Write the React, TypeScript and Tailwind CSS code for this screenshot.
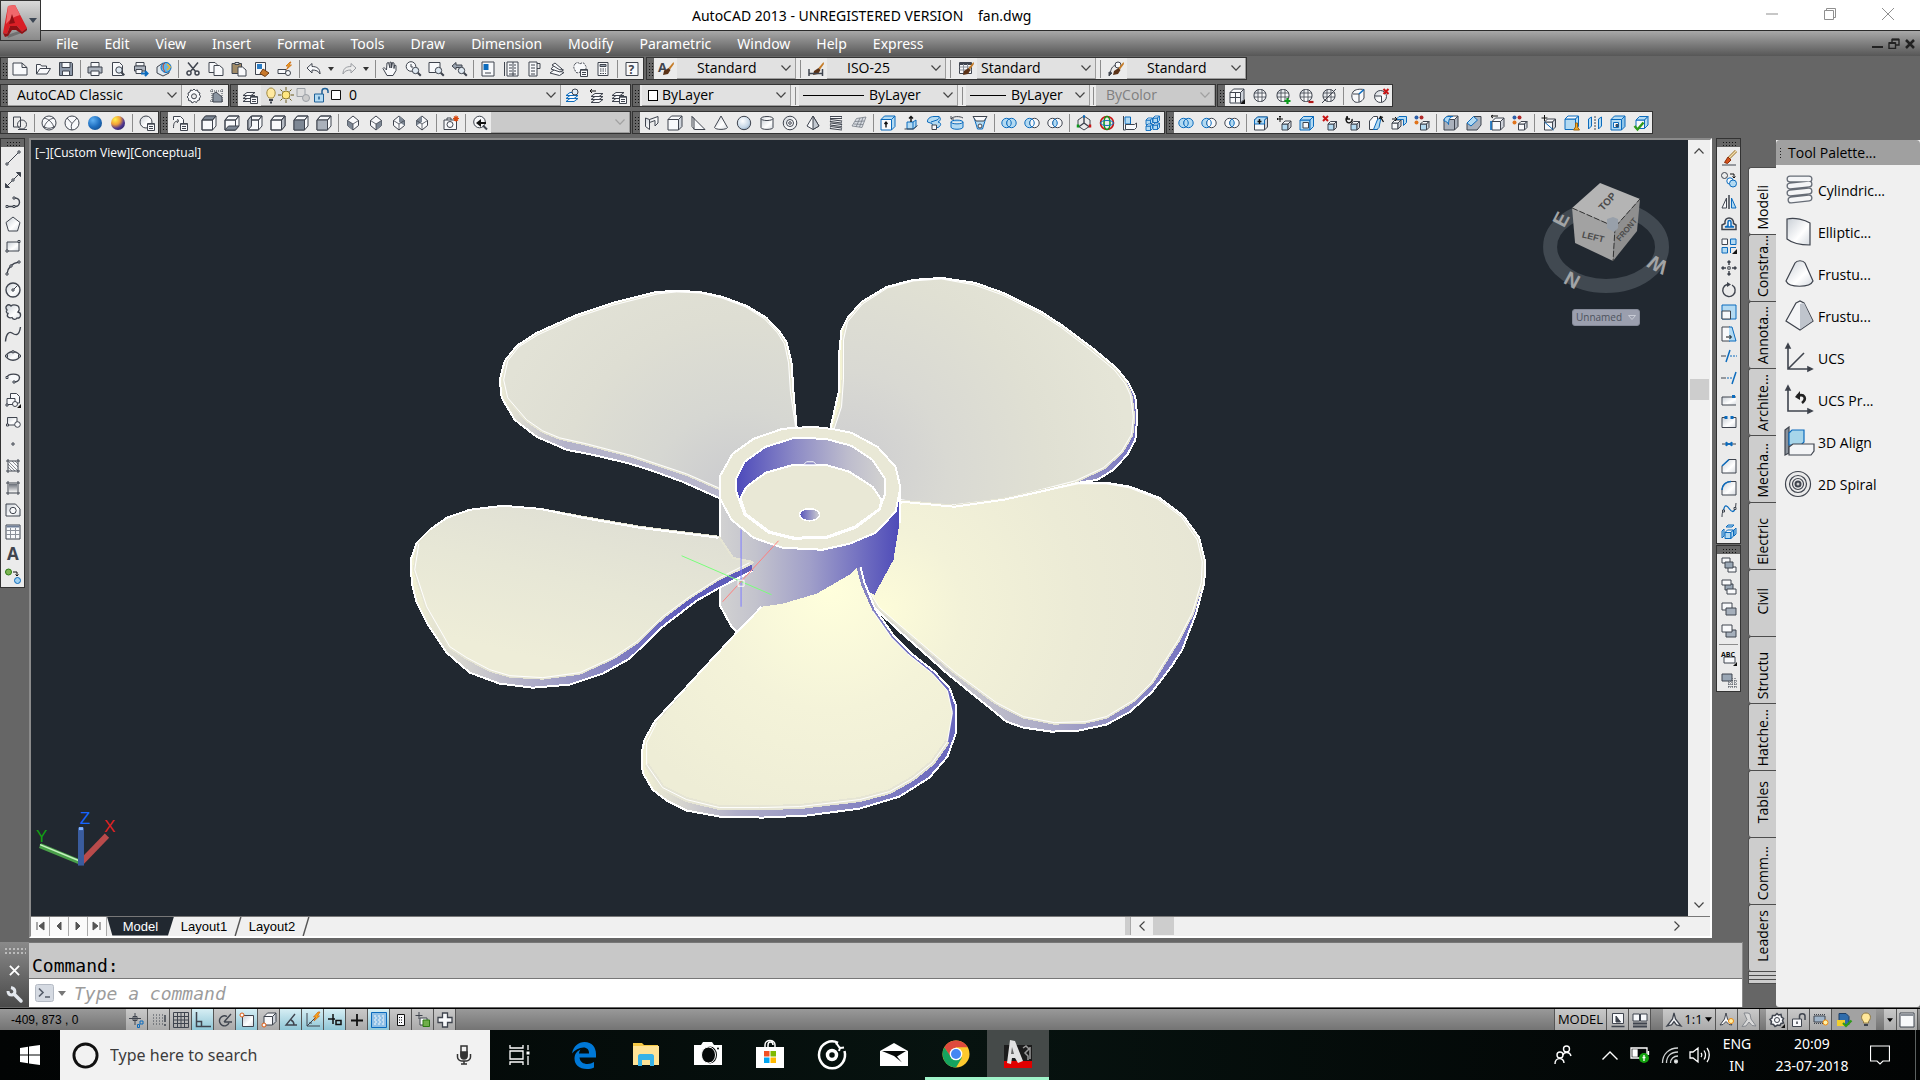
import React from 'react';

const K = '#3f444e';
const B = '#0b6bbd';
const L = '#b3daf2';
const W = '#f8f9fb';

interface CubeProps {
  x?: number;
  y?: number;
  s?: number;
  d?: number;
  c?: string;
  f?: string;
  t?: string;
  r?: string;
}

// Small isometric box used by most of the solid editing icons
const Cube: React.FC<CubeProps> = ({ x = 1.5, y = 1.5, s = 9, d = 4, c = K, f = W, t = W, r = '#cfd4db' }) => (
  <g stroke={c} strokeLinejoin="round">
    <path fill={f} d={`M${x} ${y + d}h${s}v${s}h${-s}z`} />
    <path fill={t} d={`M${x} ${y + d}l${d} ${-d}h${s}l${-d} ${d}z`} />
    <path fill={r} d={`M${x + s} ${y + d}l${d} ${-d}v${s}l${-d} ${d}z`} />
  </g>
);

const Node: React.FC<{ x: number; y: number; c?: string }> = ({ x, y, c = K }) => (
  <path fill={W} stroke={c} strokeWidth="1" d={`M${x - 1} ${y - 1}h2v2h-2z`} />
);

const List = () => (
  <g>
    <path fill={W} d="M8.5 8.5h7v7h-7z" />
    <path d="M8.5 9.2h7M10 11.5h4M10 13.5h4" />
  </g>
);

const Lens: React.FC<{ x?: number; y?: number }> = ({ x = 10, y = 10 }) => (
  <g>
    <circle cx={x} cy={y} r="3.2" fill="#dfe9f2" />
    <path strokeWidth="2" d={`M${x + 2.3} ${y + 2.3}l3 3`} />
  </g>
);

const Brush: React.FC = () => (
  <g stroke="none">
    <path fill="#c47b27" d="M15.5 1l-5 6 1.500 1.500L16 3z" />
    <path fill="#5b3216" d="M10.500 7L6 10l-1 4 5-1 2.500-4z" />
  </g>
);

const Rings: React.FC<{ a: string; b: string; m: string; ca?: string; cb?: string }> = ({ a, b, m, ca = B, cb = B }) => (
  <g>
    <circle cx="5.500" cy="8" r="4.700" fill={a} stroke={ca} />
    <circle cx="10.500" cy="8" r="4.700" fill={b} stroke={cb} />
    <path fill={m} stroke={B} d="M8 4a4.700 4.700 0 0 1 0 8 4.700 4.700 0 0 1 0-8z" />
  </g>
);

const Sheets: React.FC<{ c?: string }> = ({ c = K }) => (
  <g fill={W} stroke={c}>
    <path d="M1 13.500l4-3h8l-4 3z" />
    <path d="M1 10.500l4-3h8l-4 3z" />
    <path d="M1 7.500l4-3h8l-4 3z" />
  </g>
);

const Globe = () => (
  <g>
    <rect x="2" y="1.500" width="12" height="12" rx="5.500" fill="url(#shine)" />
    <path d="M2 5h12M2 9h12M6 1.500v12M10 1.500v12" strokeWidth=".8" />
  </g>
);

const Dots = () => (
  <g stroke="none">
    <circle cx="2.500" cy="2.500" r="2" fill="#2d5fa8" />
    <circle cx="7.500" cy="2.500" r="2" fill="#b02a2a" />
    <circle cx="2.500" cy="7.500" r="2" fill="#e0741c" />
  </g>
);

const ViewBox: React.FC<{ side: string }> = ({ side }) => (
  <g strokeLinejoin="round">
    <path fill={W} d="M1 5l3.500-4H15v10l-3.500 4H1z" />
    <path fill={side === 'Top' ? '#7d8794' : 'none'} d="M1 5l3.500-4H15l-3.500 4z" />
    <path fill={side === 'Front' ? '#7d8794' : side === 'Back' ? '#aab1bb' : 'none'} d="M1 5h10.500v10H1z" />
    {side === 'Right' && <path fill="#b4bac3" d="M11.500 5L15 1v10l-3.500 4z" />}
    {side === 'Left' && <path fill="#b4bac3" d="M1 5l3.500-4v10L1 15z" />}
    {side === 'Bottom' && <path fill="#7d8794" d="M1 15l3.500-4H15l-3.500 4z" />}
    <path d="M11.500 5L15 1" />
  </g>
);

const Iso: React.FC<{ shade: string }> = ({ shade }) => (
  <g strokeLinejoin="round">
    <path fill={W} d="M8 1l5.500 4.500v5L8 15l-5.500-4.500v-5z" />
    <path fill="#7d8794" stroke="none" d={shade} />
    <path strokeWidth=".8" d="M2.500 5.500L8 9l5.500-3.500M8 9v6" />
  </g>
);

const Hash = () => <path d="M3 1v14M13 1v14M1 3h14M1 13h14" />;

const ICONS: Record<string, React.ReactNode> = {
  'New': <path fill={W} d="M1 2h9l5 4.500V14H1zM10 2v4.500h5" />,
  'Open': <path fill={W} d="M1.500 13V3.500h4l1 1.500h5v2.500M1.500 13l3.500-5.500h10.500L12 13z" />,
  'Save': <g><path fill="#8d98a8" d="M1.500 1.500h12l1 1v12h-13z" /><path fill={W} d="M4 1.500h8v5H4zM4.500 10h7v4.500h-7z" /></g>,
  'Plot': <g><path fill={W} d="M4 1.500h8V6H4z" /><path fill="#aeb5bf" d="M1 6h14v6H1z" /><path fill={W} d="M4 10h8v4.500H4z" /></g>,
  'Plot Preview': <g><path fill={W} d="M2.500 1.500h7l3 3v10h-10z" /><Lens x={9} y={9} /></g>,
  'Publish': <g><path fill={W} d="M3 1.500h8V5H3z" /><path fill="#aeb5bf" d="M1.500 5h11v5h-11z" /><path fill={W} d="M3 8.500h6v4H3z" /><path stroke={B} strokeWidth="2" d="M8 12.500h6M12 10l2.500 2.500L12 15" /></g>,
  '3DDWF': <g><path fill="#dfe7ee" d="M1 6l6-4 6 4v6l-6 3-6-3z" /><circle cx="10" cy="6.500" r="5" fill="#63b6e8" stroke={B} /><path stroke="#d33b1f" d="M9 2c-3 2-2 6 0 9" /><path stroke="#f0b52c" strokeWidth="1.600" d="M11 3l3 3-3 3" /></g>,
  'Cut': <path strokeWidth="1.500" d="M3 1.500l7.500 9M13 1.500l-7.500 9M2 12.500a2 2 0 1 0 4-1 2 2 0 1 0-4 1M10 12a2 2 0 1 0 4 0 2 2 0 1 0-4 0" />,
  'Copy': <g fill={W}><path d="M1 1.500h6l2 2v8H1z" /><path d="M6 4.500h5.500l3.500 3v7H6z" /></g>,
  'Paste': <g><path fill="#a08a66" d="M1 2.500h9.500v10H1z" /><path fill="#ddd" d="M4 1.500h4v2H4z" /><path fill={W} d="M7 6h4.500l3.500 3v6H7z" /></g>,
  'Match Properties': <g><path fill={W} d="M1.500 1.500h10v12h-10z" /><path fill="#2b7cc4" stroke="none" d="M3 3h5v5H3z" /><path fill="#c8782a" stroke="#6b3a12" d="M9 8l6 4-4 3.500-5-3z" /></g>,
  'Block Editor': <g><path fill={W} d="M1 8.500h8v4H1z" /><circle cx="11" cy="12" r="2.500" fill={W} /><path fill="#f6a821" stroke="#c96a10" strokeWidth=".8" d="M13 1l-4 4h2.500L9.500 8.500l5-4.500H12l2-3z" /></g>,
  'Undo': <path fill={W} d="M1 7l5-4.500V5.500c5 0 8 2 8 7.500-1.500-3-4-4-8-4v3z" />,
  'Redo': <path stroke="#9a9da2" d="M15 7l-5-4.500V5.500c-5 0-8 2-8 7.500 1.500-3 4-4 8-4v3z" />,
  'Pan': <path fill={W} d="M4.500 9L2 6.500 1 7.500l4 7h6l3-5V4.500l-1.500-.5-.5 3.500V2l-1.500-.5L9.500 7V1.500L8 1v6L6.500 1.500 5 2z" />,
  'Zoom Realtime': <g><circle cx="6" cy="5.500" r="4.800" fill={W} /><path d="M6 3v3h2" /><Lens x={10.500} y={9.500} /></g>,
  'Zoom Window': <g><path fill={W} d="M1 1.500h11v10H1z" /><Lens x={10.500} y={9.500} /></g>,
  'Zoom Previous': <g><path fill="#9aa3af" d="M1 5l4-3.500V4h6v2.500H5V8.500z" /><Lens x={10.500} y={9.500} /></g>,
  'Properties': <g><path fill={W} d="M2 1h12v14H2z" /><path fill={B} stroke="none" d="M3.500 3h5v6h-5z" /><path d="M5 12h6" /></g>,
  'DesignCenter': <g><path fill={W} d="M4 1h11v14H4z" /><path d="M1.500 1v14M6 4h3M11 4h2M6 7h3M11 7h2M6 10h3M11 10h2M6 13h7M10 1v14" /></g>,
  'Tool Palettes': <g><path fill={W} d="M3 1h8v14H3z" /><path d="M11 2.500h3v5h-3M5 4h4M5 7h4M5 10h4M5 13h4" /></g>,
  'Sheet Set Manager': <g fill={W}><path d="M1 12l9.500 2.500 4.500-3-9.500-3z" /><path d="M2 8l9 3 3.500-2-9-5z" /><path d="M3 4l8 5 2-1L6 2z" /></g>,
  'Markup Set Manager': <g><path strokeDasharray="2 1" fill={W} d="M3 3c2-2.500 4-1 5 0 2-2 5-1 5 1 2 2 1 4 0 5 0 3-3 4-5 2-3 2-5 0-5-2-2-2-1-5 0-6z" /><List /></g>,
  'QuickCalc': <g><path fill={W} d="M3 1.500h10v13H3z" /><path fill="#9aa3af" d="M5 3.500h6v2H5z" /><path strokeDasharray="1.500 1" d="M5 8h6M5 10h6M5 12.500h6" /></g>,
  'Help': <g><path fill={W} d="M2 1.500h12v13H2z" /><text x="4.500" y="12.500" fontSize="12" fontWeight="bold" fill={K} stroke="none">?</text></g>,
  'Text Style': <g><text x="0" y="11" fontSize="13" fontWeight="bold" fill={K} stroke="none">A</text><Brush /></g>,
  'Dimension Style': <g><Brush /><path strokeWidth="1.500" d="M1 8v7M14.500 8v7M1 12.500h13.500" /></g>,
  'Table Style': <g><path fill={W} d="M1.500 1.500h12v11h-12z" /><path strokeWidth="2" d="M1.500 3h12" /><path stroke="#8b919a" d="M1.500 6h12M1.500 9h12M5.500 3v9M9.500 3v9" /><Brush /></g>,
  'Multileader Style': <g><circle cx="10" cy="4" r="3" fill={W} /><path d="M7.500 4.500C4 5 3 8 2 13" /><path fill={K} d="M1 15v-4l3 1z" /><Brush /></g>,
  'Workspace Settings': <g><path fill={W} d="M8 1l1.500 1.500 2-.5.5 2 2 1-.7 2L15 8.500l-1.700 1.500.2 2-2 .5-1 2L8.500 13.500 6 15l-1-2-2.500-.5.2-2L1 9l1.500-1.500L2 5l2-1 .5-2 2 .5z" /><circle cx="8" cy="8.300" r="2.500" fill="#ebebeb" /></g>,
  'My Workspace': <g><path strokeDasharray="1 1" d="M1 3h14M3 1v14M1 13h14M13 1v14" /><path fill="#8b95a1" d="M4 14V6l3-2 6 5v5z" /></g>,
  'Layer Properties Manager': <g><Sheets /><List /></g>,
  'Make Object Layer Current': <g><Sheets c={B} /><circle cx="10" cy="4" r="3" fill="#dfeaf4" /></g>,
  'Layer Previous': <g><g transform="translate(2 1)"><Sheets /></g><path stroke="#111" d="M8 3H2M4 1L2 3l2 2" /></g>,
  'Layer States Manager': <g><Sheets /><List /></g>,
  'Smooth Object': <g><Cube x={1} y={1} s={10.5} d={3.5} /><path d="M6.500 4.500v10M1 9.500h10.500" /><path fill="#111" stroke="none" d="M16 11v5h-5z" /></g>,
  'Mesh Sphere': <Globe />,
  'Smooth More': <g><Globe /><path stroke="#0a9a1a" strokeWidth="2.200" d="M9.500 13h6M12.500 10v6" /></g>,
  'Smooth Less': <g><Globe /><path stroke="#b01616" strokeWidth="2.200" d="M10.500 14h5" /></g>,
  'Refine Mesh': <g><Globe /><path d="M1 15L15 1" /></g>,
  'Add Crease': <g><path fill={W} d="M3 4c2-3 7-3 11-2.500V10c-2 4-6 5-9 4C1.500 12 1 7 3 4z" /><path d="M3 6h6v8" /><path stroke={B} strokeWidth="1.600" d="M9 6l5-4.500" /></g>,
  'Remove Crease': <g><circle cx="7.500" cy="8.500" r="6" fill="url(#shine)" /><path d="M1.500 8h7v6" /><path stroke="#c81414" strokeWidth="2" d="M10.500 1l5 5M15.500 1l-5 5" /></g>,
  '2D Wireframe': <g fill="none"><path d="M1.500 2h7v10h-7z" /><circle cx="10" cy="9.500" r="4.500" /><path d="M6 14.500h9" /></g>,
  '3D Wireframe': <g><circle cx="8" cy="8" r="7" fill={W} /><path strokeWidth=".9" d="M3 3c5 1 9 5 10 10M13 3C8 4 4 8 3 13M2 11c4 3 8 3 12 0" /></g>,
  '3D Hidden': <g><circle cx="8" cy="8" r="7" fill={W} /><path strokeWidth=".9" d="M3 3l5 5.500L13 3M8 8.500c-1 2-1 4 0 6.500" /></g>,
  'Realistic': <circle cx="8" cy="8" r="7" fill="url(#blueBall)" stroke="none" />,
  'Conceptual': <circle cx="8" cy="8" r="7" fill="url(#warmBall)" stroke="none" />,
  'Manage Visual Styles': <g><circle cx="7" cy="7" r="6" fill="url(#shine)" /><List /></g>,
  'Named Views': <g><path fill={W} d="M1.500 5V1.500h7l3 3V9" /><path d="M1.500 13c0-5 1-7 5-7l-1-2M6.500 6L5 8" /><List /></g>,
  'Top View': <ViewBox side="Top" />,
  'Bottom View': <ViewBox side="Bottom" />,
  'Left View': <ViewBox side="Left" />,
  'Right View': <ViewBox side="Right" />,
  'Front View': <ViewBox side="Front" />,
  'Back View': <ViewBox side="Back" />,
  'SW Isometric': <Iso shade="M2.500 5.500L8 9v6l-5.500-4.500z" />,
  'SE Isometric': <Iso shade="M13.500 5.500L8 9v6l5.500-4.500z" />,
  'NE Isometric': <Iso shade="M8 1l5.500 4.500v5L8 7z" />,
  'NW Isometric': <Iso shade="M8 1L2.500 5.500v5L8 7z" />,
  'Create Camera': <g><path fill={W} d="M1 5h12.500v9.500H1zM4 5V3h4v2" /><circle cx="7" cy="9.500" r="3" /><path stroke="#d8480e" strokeWidth="1.200" d="M13 .5v6M10 3.500h6M11 1.500l4 4M15 1.500l-4 4" /></g>,
  'Previous View': <g><circle cx="7.500" cy="7" r="5.800" fill={W} /><path strokeWidth="2" d="M11 10.500l4 4" /><path fill="#111" stroke="none" d="M4 8l5-4v3h5v2H9v3z" /></g>,
  'Polysolid': <path fill="url(#shine)" d="M1.500 3l4 1.500v10l-4-3zM5.500 4.500L14 1.500V8l-3 3V5.500l-5.500 2" />,
  'Box': <Cube x={1} y={1} s={10.5} d={3.5} />,
  'Wedge': <path fill={W} strokeLinejoin="round" d="M2 1.500v10l2.500 3H15zM2 1.500l2 2v11" />,
  'Cone': <path fill="url(#shine)" d="M8 1L1.500 12.500c1 2.500 12 2.500 13 0z" />,
  'Sphere': <circle cx="8" cy="8" r="6.700" fill="url(#blueGrey)" />,
  'Cylinder': <g fill="url(#shine)"><path d="M2 3.500v9c0 2.500 12 2.500 12 0v-9" /><ellipse cx="8" cy="3.500" rx="6" ry="2" /></g>,
  'Torus': <g><circle cx="8" cy="8" r="6.800" fill="url(#shine)" /><circle cx="8" cy="8" r="3.500" fill={W} /><circle cx="8" cy="8" r="1.300" /></g>,
  'Pyramid': <g><path fill={W} d="M8 1L2 11l6 3.500 6-3.500z" /><path fill="#c3c9d1" d="M8 1l6 10-6 3.500z" /></g>,
  'Helix': <g><path strokeWidth="3" d="M2 2.500h12M2 5.500l12 1.500M2 9l12 1.500M2 12.500l12 1.500" /><path stroke={W} strokeWidth="1" d="M2.500 2.500h11M2.500 5.500l11 1.500M2.500 9l11 1.500M2.500 12.500l11 1.500" /></g>,
  'Planar Surface': <path fill="#d8dce2" stroke="#777d86" strokeWidth=".8" d="M5.500 3.500l9.500-1.500-4 10.500L1 11zM9 3L5 12M12 2.500L8.500 12M4 6.500l9.500-.5M3 9l9 .500" />,
  'Extrude': <g><Cube x={1} y={1} s={10.5} d={3.5} c={B} f={W} t={L} r={L} /><path stroke="#111" strokeWidth="1.400" d="M6 12.500v-5M4.500 9L6 7.200 7.500 9" /></g>,
  'Presspull': <g><path fill={L} stroke={B} d="M4 14V7h6v7zM10 14l3-2.500V5l-3 2" /><path d="M1.500 14h9l4-3.500" /><path stroke="#111" strokeWidth="1.400" d="M8 7V1.500M6 3.500l2-2 2 2" /></g>,
  'Sweep': <g><path fill={L} stroke={B} d="M8 1.500h5c2 2 2 4-1 5.500 4 1 3 4 0 5.500H7l-1-4L1.500 7C1 4 4 1.500 8 1.500zM5 7l6-2M11 5c2-1 2-2 2-3.500" /><path fill={W} d="M6 10h4.500v4.500H6z" /></g>,
  'Revolve': <g><path fill={L} stroke={B} d="M2 7c0-2.500 12-2.500 12 0v5c0 3-12 3-12 0zM2 7c0 2.500 12 2.500 12 0" /><path d="M2 4c2-3 9-3 12-1M2 1v3h3" /></g>,
  'Loft': <g><path fill={L} stroke={B} d="M2 2.500L5.500 14h5L14 2.500z" /><path fill={W} d="M1 1.500h14L12 6H4z" /><circle cx="8" cy="11" r="2" fill={W} /></g>,
  'Union': <Rings a={L} b={L} m={L} />,
  'Subtract': <Rings a={L} b={W} m={W} cb={K} />,
  'Intersect': <Rings a={W} b={W} m={L} ca={K} cb={K} />,
  '3D Move': <g><path strokeWidth="1.400" d="M8 8V2M8 8l-5.500 4M8 8l5.500 4" /><path d="M8 1l6 4v6l-6 4-6-4V5z" /><path stroke="#0a9a1a" strokeWidth="2.500" d="M2 9.500v3" /><path stroke="#c81414" strokeWidth="2.500" d="M14 9.500v3" /><path stroke={B} strokeWidth="2.500" d="M7 1.500h2" /></g>,
  '3D Rotate': <g><circle cx="8" cy="8" r="6.500" stroke="#c81414" strokeWidth="1.600" /><ellipse cx="8" cy="8" rx="3" ry="6.500" stroke="#0a9a1a" strokeWidth="1.500" /><ellipse cx="8" cy="8" rx="6.500" ry="2.500" stroke={B} /></g>,
  '3D Align': <g><path fill={L} stroke={B} d="M3 2h5.500v7H3z" /><path fill={W} d="M3.500 9.500h9l2-1.500v4.500l-2 2h-9zM1.500 1v14h2" /></g>,
  '3D Array': <g strokeWidth=".9"><Cube x={8} y={1} s={4.5} d={2} c={B} f={L} t={W} r={L} /><Cube x={1} y={3} s={4.5} d={2} c={B} f={L} t={W} r={L} /><Cube x={8} y={8} s={4.5} d={2} c={B} f={L} t={W} r={L} /><Cube x={1} y={9} s={4.5} d={2} c={B} f={L} t={W} r={L} /></g>,
  'Extrude Faces': <g><Cube s={10} d={3} y={2} /><path fill={L} stroke={B} d="M1.500 5l3-3h10l-3 3v4h-10z" /><path stroke="#111" strokeWidth="1.500" d="M6.500 4v5M4.500 6.500h4" /></g>,
  'Move Faces': <g><Cube x={6} y={6} s={6} d={3} f={L} c={K} /><path stroke="#111" d="M4 1v6M1 4h6M3 2l1-1 1 1M2 3L1 4l1 1" /></g>,
  'Offset Faces': <g><Cube c={B} f={L} t={L} r={L} s={10} d={3.500} x={1} /><path fill={W} d="M4 7.500h5.500v5.500H4z" /></g>,
  'Delete Faces': <g><Cube x={6} y={6.500} s={6} d={2.500} f={L} c={K} /><path stroke="#c81414" strokeWidth="2" d="M1 1l5 5M6 1L1 6" /></g>,
  'Rotate Faces': <g><Cube x={6} y={6.500} s={6} d={2.500} f={L} c={K} /><path stroke="#111" strokeWidth="1.400" d="M3 2a3 3 0 1 0 4 2M2 1v3h3" /></g>,
  'Taper Faces': <g><path fill={W} d="M1.500 6l4-4.500h4v13h-8z" /><path fill={L} stroke={B} d="M5.500 14.500l4-10 3.500-2-2 10-2 2z" /><path stroke="#111" strokeWidth="1.300" d="M15.500 7l-3-5M11.500 4l1-2.500 2.500 1" /></g>,
  'Copy Faces': <g><Cube x={1} y={5} s={6} d={3} c={K} /><path fill={L} stroke={B} d="M5 4.500L8 1.500h7.500v6l-3 3v-6H5z" /><path stroke="#111" d="M1 4h5M4 2l2 2-2 2" /></g>,
  'Color Faces': <g><Cube x={6.500} y={6.500} s={6} d={2.500} f={L} c={K} /><Dots /></g>,
  'Fillet Edge': <g><Cube r="#aab1bc" f="#aab1bc" x={1} y={1} s={10.5} d={3.5} /><path fill={L} stroke={B} d="M1 6c0-3 2-4.500 4-4.500h5c-3 0-4.500 3-4.500 8C5 7.500 3 6 1 6z" /></g>,
  'Chamfer Edge': <g><path fill="#aab1bc" d="M1 8.500L8 1.500h7V10l-4 5H1z" /><path fill={L} stroke={B} d="M1 8l6.500-6.500 4 3.500-6.500 6z" /></g>,
  'Copy Edges': <g><Cube x={3} y={3} s={8.500} d={3.500} /><path stroke="#111" d="M9 1H2M4 0L2 1.500 4 3" /><path stroke={B} strokeWidth="1.600" d="M2 6v9" /></g>,
  'Color Edges': <g><Cube x={6.500} y={6.500} s={6} d={2.500} c={K} /><Dots /></g>,
  'Imprint': <g><Cube x={3.500} y={4} s={8} d={3} /><path stroke={B} d="M3.500 7l9 8" /><path stroke="#111" d="M3.500 0v6M.5 3h6" /></g>,
  'Clean': <g><Cube x={1} y={1} s={10.5} d={3} c={B} f={L} t={W} r={L} /><path fill="#f4ac24" stroke="#9b6310" d="M11.500 8h2v4l2 3h-6l2-3z" /></g>,
  'Separate': <g><path fill={L} stroke={B} d="M1.500 4l3-2v9l-3 3zM11.500 4l3-2v9l-3 3z" /><path strokeDasharray="2 1" d="M8 1v14" /></g>,
  'Shell': <g><Cube c={B} f={L} t={L} r="#8fc4e8" s={10.5} d={3.500} x={1} y={1} /><path fill={W} stroke={B} d="M3.500 7.500h5v5h-5z" /><path fill={B} d="M6 9.500h2v2H6z" /></g>,
  'Check': <g><Cube x={3} y={1.500} s={8.5} d={3.500} c={B} f={W} t={L} r={L} /><path stroke="#2f9a1b" strokeWidth="2.400" d="M1.500 11l3 3.500 6-7" /></g>,

  // Draw
  'Line': <g><path d="M2 14L14 2" /><Node x={2} y={14} /><Node x={14} y={2} /></g>,
  'Construction Line': <g><path d="M2 14L14 2" /><path fill={K} d="M0.500 15.500v-4l4 4zM15.500.500v4l-4-4z" /><Node x={8} y={8} /></g>,
  'Polyline': <g><path strokeWidth="1.400" d="M2 12.500h8c6 0 6-8.500 0-8.500H9" /><Node x={2} y={12.500} /><Node x={9} y={12.500} /><Node x={9} y={4} /></g>,
  'Polygon': <path fill="url(#shine)" d="M8 1l7 5.500-2.500 8.500h-9L1 6.500z" />,
  'Rectangle': <g><path fill="url(#shine)" d="M2 4h12v9H2z" /><Node x={2} y={13} /><Node x={14} y={3.500} /></g>,
  'Arc': <g><path strokeWidth="1.400" d="M2 14C3 7 7 3 14 2" /><Node x={2} y={14} /><Node x={6} y={6} /><Node x={14} y={2} /></g>,
  'Circle': <g><circle cx="8" cy="8" r="7" fill="url(#shine)" strokeWidth="1.400" /><path d="M8 8l4.500-4.500" /><Node x={8} y={8} /></g>,
  'Revision Cloud': <path fill="url(#shine)" strokeWidth="1.300" d="M2 6C-1 3 3-1 6 2c2-2 8-1 8 2 1 2 0 3-1 4 4 1 3 7-1 6-1 2-4 2-5-.500-3 1-6-1-4-4C1 9 1 7 2 6z" />,
  'Spline': <path strokeWidth="1.400" d="M.500 15.500C1 8 4 5 7 7s7 4 8.500-6" />,
  'Ellipse': <g><ellipse cx="8" cy="8" rx="6.500" ry="4.200" fill="url(#shine)" strokeWidth="1.400" /><Node x={1.500} y={8} /><Node x={14.500} y={8} /><Node x={8} y={3.800} /></g>,
  'Ellipse Arc': <g><path fill={W} strokeWidth="1.400" d="M2 7.500C3 3 14 3 14.500 7.500 14.500 11 11 12 9 12" /><Node x={2} y={7.500} /><Node x={9} y={12} /></g>,
  'Insert Block': <g><path fill={W} d="M5.500 1.500h6l3 3V11h-9z" /><path fill={W} d="M2 6.500h8v6H2z" /><circle cx="10" cy="12" r="2.500" fill={W} /><Node x={2} y={13} /><path fill="#111" stroke="none" d="M16 12v4h-4z" /></g>,
  'Make Block': <g><path fill="url(#shine)" d="M2.500 3.500h9.500V11h-9.500z" /><circle cx="12.500" cy="10.500" r="2.800" fill={W} /><Node x={2.500} y={11} /></g>,
  'Point': <Node x={8} y={8} />,
  'Hatch': <g><path fill={W} stroke="none" d="M3 3h10v10H3z" /><path strokeWidth=".6" d="M3 6l7 7M3 9l4 4M4 4l9 9M7 3l6 6M10 3l3 3" /><Hash /></g>,
  'Gradient': <g><path fill="url(#darkFade)" stroke="none" d="M4 4h8v8H4z" /><Hash /></g>,
  'Region': <g><path fill="url(#shine)" d="M1 2h9.500l4.500 5v7H1z" /><circle cx="8" cy="8.500" r="3.200" fill={W} /></g>,
  'Table': <g><path fill={W} d="M1 1h14v14H1z" /><path strokeWidth="2" stroke="#6f7f98" d="M1.500 2.500h13" /><path stroke="#8b919a" d="M1 6.500h14M1 10.500h14M5.500 4v11M10.500 4v11" /></g>,
  'Multiline Text': <text x="2" y="14" fontSize="17" fontWeight="bold" fill={K} stroke="none">A</text>,
  'Add Selected': <g><circle cx="3.500" cy="4" r="3" fill="#7db554" stroke="#2c7a12" /><circle cx="12.500" cy="12.500" r="3" fill="#9fd0f0" stroke={B} /><path stroke="#111" d="M8 4h4v4M10.500 6.500L12 8l1.500-1.500" /></g>,

  // Modify
  'Erase': <g><path stroke="#9a7330" strokeWidth="3" d="M15 1L8 8" /><path stroke="#f2dfae" strokeWidth="1.500" d="M15 1L8 8" /><path fill="#d4501a" stroke="#8a2b06" d="M7 7l3 3-3.500 3.500-3-1z" /><path d="M1 15h14" /></g>,
  'Copy Object': <g><circle cx="3.500" cy="3.500" r="3" /><circle cx="9" cy="9" r="3.200" fill={W} stroke={B} /><circle cx="12" cy="11.500" r="3.500" fill={L} stroke={B} /><path stroke="#111" d="M9 2h4v4M11.500 4.500L13 6l1.500-1.500" /></g>,
  'Mirror': <g><path fill={W} d="M5.500 4v10H1z" /><path fill={L} stroke={B} d="M10.500 4v10H15z" /><path strokeWidth="1.500" d="M8 1v14" /></g>,
  'Offset': <g><path strokeWidth="1.500" d="M1 13.500V9l3-1.500C3 0 13 0 12.500 7.500L15 9v4.500z" /><path fill={W} stroke={B} strokeWidth="1.500" d="M4 11l3-1V6c0-2 3-2 3 0v4l3 1z" /></g>,
  'Array': <g><path fill={L} stroke={B} d="M9.500 1H15v5.500H9.500zM1 9.500h5.500V15H1z" /><path fill={W} d="M1 1h5.500v5.500H1z" /><path stroke={B} d="M9.500 15V9.500H15" /><path fill="#111" stroke="none" d="M16 11v5h-5z" /></g>,
  'Move': <g><path strokeWidth="1.500" d="M8 1v4M8 11v4M1 8h4M11 8h4M6.500 2.500L8 1l1.500 1.500M6.500 13.500L8 15l1.500-1.500M2.500 6.500L1 8l1.500 1.500M13.500 6.500L15 8l-1.500 1.500" /><path d="M6.800 6.800h2.400v2.400H6.800z" /></g>,
  'Rotate': <g><path strokeWidth="1.400" d="M6 2.500a6.200 6.200 0 1 0 5 .5" /><path fill={K} stroke="none" d="M6 0l4 2.500L6 5z" /></g>,
  'Scale': <g><path fill={L} stroke={B} d="M1 1h14v14H1z" /><path fill={W} d="M1 7h8.500v8H1z" /></g>,
  'Stretch': <g><path fill={W} d="M1 1h8v14H1z" /><path fill={L} stroke={B} d="M8 1h3l4 14H8" /><path stroke="#111" d="M5 11h5M8.500 9l2 2-2 2" /></g>,
  'Trim': <g><path d="M0 8h5" /><path stroke={B} strokeDasharray="2 1" d="M9 8h7" /><path stroke={B} strokeWidth="1.500" d="M9 2L5 14" /></g>,
  'Extend': <g><path d="M0 8h5" /><path stroke={B} strokeDasharray="2 1" d="M6 8h5" /><path stroke={B} strokeWidth="1.500" d="M15 2l-4 12" /></g>,
  'Break at Point': <g><path fill="url(#shine)" d="M15 5H1v8h14" /><path fill={B} stroke="none" d="M11 3h3v3h-3z" /></g>,
  'Break': <g><path fill="url(#shine)" d="M4 3.500H1v10h14v-10h-3" /><path fill={B} stroke="none" d="M3.500 2h3v3h-3zM9.500 2h3v3h-3z" /></g>,
  'Join': <g><path d="M1 8h14" /><path fill={B} stroke={B} d="M5 6l3 2-3 2zM11 6L8 8l3 2z" /></g>,
  'Chamfer': <g><path fill="url(#shine)" d="M1 15V8l7-6.500h7V15z" /><path stroke={B} strokeWidth="1.500" d="M1 8l7-6.500" /></g>,
  'Fillet': <g><path fill="url(#shine)" d="M1 15v-5C1 5 5 1.500 10 1.500h5V15z" /><path stroke={B} strokeWidth="1.500" d="M1 10c0-5 4-8.500 9-8.500" /></g>,
  'Blend Curves': <g><path stroke={B} strokeWidth="1.300" d="M2.500 9c1-8 4-5 6-2s5 4 5.500-1" /><path d="M1 15c0-3 .500-5 1-6M14.500 6l.5-5" /><Node x={2.500} y={9} /><Node x={14} y={6.500} /></g>,
  'Explode': <g><Cube x={4} y={6} s={6} d={2.500} c={B} f={L} t={W} r={L} /><path fill={L} stroke={B} d="M1 7l2-2v7l-2 2zM13 6l2-2v6l-2 2zM5 3l2-2h6l-2 2z" /></g>,
  'Bring to Front': <g><path fill={W} d="M1 1h8v5H1zM7 10h8v5H7z" /><path fill="#9aa7b5" d="M4 5h8v6H4z" /></g>,
  'Send to Back': <g><path fill="#9aa7b5" d="M4 5h8v6H4z" /><path fill={W} d="M1 1h9v5H1zM6 10h9v5H6z" /></g>,
  'Bring Above Objects': <g><path fill={W} d="M1 2h10v7H1z" /><path fill="#a5afbb" d="M5 7h10v7H5z" /></g>,
  'Send Under Objects': <g><path fill="#a5afbb" d="M5 7h10v7H5z" /><path fill={W} d="M1 2h10v7H1z" /></g>,
  'Bring Text to Front': <g><path fill={W} d="M3 7h11v6H3z" /><text x="0" y="7" fontSize="7" fontWeight="bold" fill="#111" stroke="none">ABC</text><path fill="#111" stroke="none" d="M16 12v4h-4z" /></g>,
  'Send Hatches to Back': <g><path strokeDasharray="1 1" d="M7 9h9M7 12h9M7 15h9M8 6v10M11 6v10M14 6v10" /><path fill="#9aa7b5" d="M1 2h10v7H1z" /></g>,

  // Status bar
  'Infer Constraints': <g><path d="M6 1v12M0 6.500h12M4 4.500h4v4H4z" /><path stroke={B} d="M11 9h3v3h-3zM8.500 12.500h2v3h-2z" /></g>,
  'Snap Mode': <g><path strokeDasharray="1 2" strokeWidth="1.200" d="M2 3h10M2 6h10M2 9h10M2 12h10" /><path strokeWidth="1.500" d="M14 3v7M14 12v2" /></g>,
  'Grid Display': <path d="M.500.500h15v15H.500zM.500 4.500h15M.500 8h15M.500 11.500h15M4.500.500v15M8 .500v15M11.500.500v15" />,
  'Ortho Mode': <path strokeWidth="1.500" d="M1.500 0v14.500H16M1.500 9.500h5v5" />,
  'Polar Tracking': <g><path strokeWidth="1.400" d="M10 4.500A5 5 0 1 0 12 11M7 10l7-8M7 10h8" /></g>,
  'Object Snap': <g><path fill="url(#shine)" d="M3.500 3.500h11v11h-11z" /><circle cx="3" cy="3" r="2" fill={W} stroke="#e05a10" /></g>,
  '3D Object Snap': <g><Cube x={3} y={1} s={8.5} d={3.500} /><circle cx="3" cy="13" r="2" fill={W} stroke="#e05a10" /></g>,
  'Object Snap Tracking': <path strokeWidth="1.400" d="M12 2L3 13h11M8 8c2 1 3 3 3 5" />,
  'Dynamic UCS': <g><path d="M2 1v13h13M2 14L12 4M4 11h3" /><path fill="#f7a41d" stroke="#d0660e" strokeWidth=".7" d="M13 0L8.500 5h2L9 9l5.500-5h-2L15 0z" /></g>,
  'Dynamic Input': <path strokeWidth="1.500" stroke="#111" d="M6 2v10M1 7h7M9 8.500h5v4H9z" />,
  'Lineweight': <path strokeWidth="1.800" stroke="#111" d="M8 2v12M2 8.500h12" />,
  'Transparency': <g><path fill="#8fc0e6" stroke={B} d="M.500.500h15v15H.500z" /><path stroke={W} strokeDasharray="2 2" d="M3 4h10M4 6h9M3 8h10M4 10h9M3 12h10" /></g>,
  'Quick Properties': <g><path fill={W} stroke="#111" d="M4.500 2.500h7v11h-7z" /><path stroke="#111" strokeDasharray="1 1" d="M6 5.500h4M6 8h4M6 10.500h4" /></g>,
  'Selection Cycling': <g><path d="M4 0v7M.500 3.500h7" /><path fill={W} d="M5 6h7v7H5z" /><path fill="#6fae4a" stroke="#2c7a12" d="M8 8h6.500v6.500H8z" /></g>,
  'Annotation Monitor': <path fill={W} strokeWidth="1.300" d="M5.500 1h5v4.500H15v5h-4.500V15h-5v-4.500H1v-5h4.500z" />,
  'Quick View Layouts': <g><path fill={W} d="M2.500 1.500h11v10h-11z" /><path fill={K} d="M6 4v6h4.500z" /><path strokeWidth="1.500" d="M1.500 14.500h13" /></g>,
  'Quick View Drawings': <g><path fill={W} d="M1 2h6.500v7H1zM8.500 2H15v7H8.500z" /><path strokeWidth="2" d="M1 11.500h14M1 14.500h14" /></g>,
  'Annotation Scale': <path fill={W} strokeWidth="1.300" d="M8 1L6.500 7 1 14l4.500-1L8 9.500l2.500 3.500 4.500 1-5.500-7z" />,
  'Annotation Visibility': <g><path fill={W} d="M7 1L5.500 7 1 13l3-.5L7 9.500l3 3 3 .5-4.500-6z" /><circle cx="12" cy="9" r="2.500" fill="#fff2a8" stroke="#ef8a10" /></g>,
  'Auto Scale': <path stroke="#85898f" fill="#d9d9d9" d="M3 1h4l2 1 1 5 5 7-4-.5L8 10l-3 4-4 .5 5-7z" />,
  'Workspace Switching': <g><path fill={W} strokeWidth="1.500" d="M8 1.500l1.500 1.500 2.500-.5.5 2.500 2 1.500-1 2 1 2.500-2.500.500-1 2-2.500-.500L6 14.500l-1.500-2L2 12l.5-2.500L1 7.500l2-1.500.5-2.500L6 3.500z" /><circle cx="8" cy="8" r="2.500" /><path fill="#111" stroke="none" d="M16 12v4h-4z" /></g>,
  'Toolbar Lock': <g><path fill={W} d="M1.500 7h9v7.500h-9z" /><path strokeWidth="1.500" d="M8.500 7V4c0-3 5.500-3 5.500 0v4M6 9.500v2.500" /></g>,
  'Hardware Acceleration': <g><path fill="#9fb4c9" d="M1 4h11v6H1z" /><path strokeDasharray="1 1" d="M1 2.500h11M1 11.500h9" /><circle cx="12.500" cy="10.500" r="2.500" fill="#fff2a8" stroke="#ef8a10" /></g>,
  'Trusted DWG': <g><path fill="#2f6cab" stroke="#1c3e66" d="M3 1.500h7l3 3v8H3z" /><path fill="#f2cf2c" stroke="none" d="M1 8h8v6H1z" /><path stroke="#2f9a1b" strokeWidth="2.200" d="M7 11l3 3 5.500-5.500" /></g>,
  'Isolate Objects': <g><path fill="#ffe79a" stroke="#8f7a45" d="M5.500 9.500C2 6 3.500 1 8 1s6 5 2.500 8.500v1.500h-5z" /><path strokeWidth="2" d="M6 13h4" /></g>,
  'Clean Screen': <g><path fill={W} d="M1 1h14v14H1z" /><path stroke="#8b9098" strokeWidth="2" d="M1.500 3h13" /></g>,
};

const Icon: React.FC<{ name: string; size?: string }> = ({ name, size = 'w-4 h-4' }) => (
  <svg viewBox="0 0 16 16" className={`${size} shrink-0 overflow-visible`} fill="none" stroke={K} strokeWidth="1" aria-hidden="true">
    {ICONS[name]}
  </svg>
);

const Tool: React.FC<{ name: string; vertical?: boolean }> = ({ name, vertical }) => (
  <button
    type="button"
    title={name}
    aria-label={name}
    className={`flex items-center justify-center shrink-0 w-[23px] ${vertical ? 'h-[22px]' : 'h-[21px]'} hover:bg-white`}
  >
    <Icon name={name} />
  </button>
);

const Sep: React.FC<{ wide?: boolean }> = ({ wide }) => (
  <span className={`flex justify-center shrink-0 ${wide ? 'w-2' : 'w-[6px]'}`}>
    <span className="w-px h-[18px] bg-[#8c8c8c]" />
  </span>
);

const Bar: React.FC<{ label: string; children: React.ReactNode }> = ({ label, children }) => (
  <div role="toolbar" aria-label={label} className="flex items-center h-[23px] bg-[#ebebeb] border border-[#333] shrink-0">
    <span className="w-[7px] h-[21px] bg-[#666] flex items-center justify-center shrink-0">
      <span className="w-[5px] h-[14px] bg-[radial-gradient(#111_1px,transparent_1px)] bg-size-[3px_3px]" />
    </span>
    {children}
  </div>
);

// "|" in a tool list stands for a separator
const Tools: React.FC<{ items: string[] }> = ({ items }) => (
  <>{items.map((name, i) => (name === '|' ? <Sep key={i} /> : <Tool key={i} name={name} />))}</>
);

const Chevron: React.FC<{ className?: string }> = ({ className = '' }) => (
  <svg viewBox="0 0 10 6" className={`w-[10px] h-[6px] shrink-0 pointer-events-none ${className}`} fill="none" stroke="#444" strokeWidth="1.2">
    <path d="M.5.5L5 5.200 9.500.5" />
  </svg>
);

interface ComboProps {
  label: string;
  value: string;
  width: string;
  pad?: string;
  disabled?: boolean;
  children?: React.ReactNode;
}

const Combo: React.FC<ComboProps> = ({ label, value, width, pad = 'pl-1', disabled, children }) => (
  <div className={`flex items-center h-[21px] pr-1 border-r border-b border-[#9d9d9d] shrink-0 ${width} ${disabled ? 'bg-[#cacaca]' : 'bg-[#e1e1e1]'}`}>
    {children}
    <select
      aria-label={label}
      disabled={disabled}
      className={`appearance-none bg-transparent outline-none flex-1 min-w-0 h-5 leading-5 text-[14px] ${pad} ${disabled ? 'text-[#7f7f7f]' : 'text-black'}`}
    >
      <option>{value}</option>
    </select>
    <Chevron className={disabled ? 'opacity-30' : ''} />
  </div>
);

const MENUS = ['File', 'Edit', 'View', 'Insert', 'Format', 'Tools', 'Draw', 'Dimension', 'Modify', 'Parametric', 'Window', 'Help', 'Express'];

const BOOLEANS = ['Union', 'Subtract', 'Intersect'];

const DRAW = [
  'Line', 'Construction Line', 'Polyline', 'Polygon', 'Rectangle', 'Arc', 'Circle', 'Revision Cloud', 'Spline', 'Ellipse',
  'Ellipse Arc', 'Insert Block', 'Make Block', 'Point', 'Hatch', 'Gradient', 'Region', 'Table', 'Multiline Text', 'Add Selected',
];

const MODIFY = [
  'Erase', 'Copy Object', 'Mirror', 'Offset', 'Array', 'Move', 'Rotate', 'Scale', 'Stretch', 'Trim', 'Extend',
  'Break at Point', 'Break', 'Join', 'Chamfer', 'Fillet', 'Blend Curves', 'Explode',
];

const ORDER = ['Bring to Front', 'Send to Back', 'Bring Above Objects', 'Send Under Objects', '|', 'Bring Text to Front', 'Send Hatches to Back'];

const TABS = ['Modeli', 'Constra...', 'Annota...', 'Archite...', 'Mecha...', 'Electric', 'Civil', 'Structu', 'Hatche...', 'Tables', 'Comm...', 'Leaders'];

// Names that fit in a tab are centred, the cut ones start at its edge
const SHORT_TABS = ['Civil', 'Tables', 'Leaders'];

const STATUS: [string, boolean][] = [
  ['Infer Constraints', false], ['Snap Mode', false], ['Grid Display', false], ['Ortho Mode', true], ['Polar Tracking', false],
  ['Object Snap', true], ['3D Object Snap', false], ['Object Snap Tracking', true], ['Dynamic UCS', true], ['Dynamic Input', true],
  ['Lineweight', false], ['Transparency', true], ['Quick Properties', false], ['Selection Cycling', false], ['Annotation Monitor', false],
];

const Defs = () => (
  <svg className="absolute w-0 h-0" aria-hidden="true">
    <defs>
      <linearGradient id="shine" x1="0" y1="0" x2="1" y2="1">
        <stop offset="0" stopColor="#c9cfd6" /><stop offset=".6" stopColor="#fff" /><stop offset="1" stopColor="#d5dae0" />
      </linearGradient>
      <linearGradient id="darkFade" x1="0" y1="0" x2="0" y2="1">
        <stop offset="0" stopColor="#6a6f78" /><stop offset="1" stopColor="#f2f2f2" />
      </linearGradient>
      <radialGradient id="blueBall" cx=".35" cy=".3" r=".8">
        <stop offset="0" stopColor="#5fb0f2" /><stop offset=".6" stopColor="#1f6fc0" /><stop offset="1" stopColor="#15508f" />
      </radialGradient>
      <radialGradient id="warmBall" cx=".3" cy=".25" r=".9">
        <stop offset="0" stopColor="#fff34a" /><stop offset=".4" stopColor="#f2a03a" /><stop offset=".7" stopColor="#54388f" /><stop offset="1" stopColor="#1b1c66" />
      </radialGradient>
      <radialGradient id="blueGrey" cx=".4" cy=".35" r=".7">
        <stop offset="0" stopColor="#fff" /><stop offset=".7" stopColor="#c5d6e6" /><stop offset="1" stopColor="#8fa6bd" />
      </radialGradient>
    </defs>
  </svg>
);

const TitleBar = () => (
  <header className="flex items-start bg-white h-[31px] border-b border-[#2b2b2b] relative">
    <button type="button" aria-label="Application menu" className="absolute z-10 left-0 top-0 w-[41px] h-[41px] border border-[#333] bg-linear-to-b from-[#d9d9d9] to-[#8a8a8a] flex items-center">
      <svg viewBox="0 0 28 34" className="w-[28px] h-[34px]">
        <path d="M6 31l18-6 2 2-19 7z" fill="#4c4c4c" opacity=".5" />
        <path d="M7 2l7-1 12 23-5 4-5-6H9l-3 8-4-1z" fill="#d91f26" />
        <path d="M7 2l7-1 5 10c-5 1-10 4-14 9z" fill="#f0686b" />
        <path d="M11 10l3 9-6 1z" fill="#8f1014" />
        <path d="M26 24l-5 4-5-6H9l-3 8-4-1 2 4 3-1 4-6h4l6 4 5-4z" fill="#8f1014" />
      </svg>
      <svg viewBox="0 0 8 5" className="w-2 h-[5px]"><path d="M0 0h8L4 5z" fill="#3c4654" /></svg>
    </button>
    <h1 className="flex-1 pl-[692px] leading-[31px] text-[14px] font-[Noto_Sans,sans-serif] text-black whitespace-pre">
      AutoCAD 2013 - UNREGISTERED VERSION{'    '}fan.dwg
    </h1>
    <div className="flex items-center h-7 gap-[46px] pr-[26px]">
      <button type="button" aria-label="Minimize"><svg viewBox="0 0 12 12" className="w-3 h-3" stroke="#8f8f8f"><path d="M0 6h12" /></svg></button>
      <button type="button" aria-label="Restore"><svg viewBox="0 0 12 12" className="w-3 h-3" fill="none" stroke="#8f8f8f"><path d="M.5 2.500h9v9h-9zM2.500 2.500v-2h9v9h-2" /></svg></button>
      <button type="button" aria-label="Close"><svg viewBox="0 0 12 12" className="w-3 h-3" stroke="#8f8f8f"><path d="M0 0l12 12M12 0L0 12" /></svg></button>
    </div>
  </header>
);

const MenuBar = () => (
  <nav className="flex items-center h-[25px] pl-[43px] pr-[5px] bg-linear-to-b from-[#a9a9a9] to-[#575757] font-[Noto_Sans,sans-serif]">
    {MENUS.map(menu => (
      <button key={menu} type="button" className="px-[13px] text-[14px] leading-6 text-white shrink-0">{menu}</button>
    ))}
    <div className="flex items-center gap-[5px] ml-auto">
      <button type="button" aria-label="Minimize drawing"><svg viewBox="0 0 11 11" className="w-[11px] h-[11px]" stroke="#222" strokeWidth="2"><path d="M0 9h11" /></svg></button>
      <button type="button" aria-label="Restore drawing"><svg viewBox="0 0 12 11" className="w-3 h-[11px]" fill="none" stroke="#222"><path strokeWidth="1.400" d="M1 5h6.500v5.500H1zM4 4.500V1.500h7V7H8" /><path strokeWidth="2" d="M4 1.500h7M1 5h6.500" /></svg></button>
      <button type="button" aria-label="Close drawing"><svg viewBox="0 0 10 10" className="w-[10px] h-[10px]" stroke="#222" strokeWidth="2.500"><path d="M1 1l8 8M9 1L1 9" /></svg></button>
    </div>
  </nav>
);

const Caret = () => (
  <button type="button" aria-label="History" className="w-3 h-[21px] shrink-0 flex items-center justify-center">
    <svg viewBox="0 0 6 4" className="w-[6px] h-1"><path d="M0 0h6L3 4z" fill="#333" /></svg>
  </button>
);

const Toolbars = () => (
  <div className="flex flex-col gap-1 pt-px pb-1">
    <div className="flex gap-[2px]">
      <Bar label="Standard">
        <Tools items={['New', 'Open', 'Save', '|', 'Plot', 'Plot Preview', 'Publish', '3DDWF', '|', 'Cut', 'Copy', 'Paste', 'Match Properties', 'Block Editor', '|', 'Undo']} />
        <Caret />
        <Tool name="Redo" />
        <Caret />
        <Tools items={['|', 'Pan', 'Zoom Realtime', 'Zoom Window', 'Zoom Previous', '|', 'Properties', 'DesignCenter', 'Tool Palettes', 'Sheet Set Manager', 'Markup Set Manager', 'QuickCalc', '|', 'Help']} />
      </Bar>
      <Bar label="Styles">
        <Tool name="Text Style" />
        <Combo label="Text style" value="Standard" width="w-[119px]" pad="pl-[20px]" />
        <Sep wide />
        <Tool name="Dimension Style" />
        <Combo label="Dimension style" value="ISO-25" width="w-[119px]" pad="pl-[20px]" />
        <Sep wide />
        <Tool name="Table Style" />
        <Combo label="Table style" value="Standard" width="w-[119px]" />
        <Sep wide />
        <Tool name="Multileader Style" />
        <Combo label="Multileader style" value="Standard" width="w-[119px]" pad="pl-[20px]" />
      </Bar>
    </div>
    <div className="flex gap-px">
      <Bar label="Workspaces">
        <Combo label="Workspace" value="AutoCAD Classic" width="w-[174px]" pad="pl-[9px]" />
        <Tools items={['Workspace Settings', 'My Workspace']} />
      </Bar>
      <Bar label="Layers">
        <Tool name="Layer Properties Manager" />
        <Combo label="Layer" value="0" width="w-[300px]">
          <svg viewBox="0 0 84 18" className="w-[84px] h-[18px] shrink-0" fill="none" stroke={K}>
            <path fill="#ffe9a0" stroke="#a0883f" d="M8 12C4 8 6 2 10 2s6 6 2 10z" />
            <path strokeWidth="2" d="M8 14h4M9 16.500h2" />
            <circle cx="25" cy="9" r="4" fill="#ffe680" stroke="#8d7a30" />
            <path stroke="#6b5a1c" d="M25 1v3M25 14v3M17 9h3M30 9h3M19.500 3.500l2 2M28.500 12.500l2 2M30.500 3.500l-2 2M21.500 12.500l-2 2" />
            <path stroke="#9ba0a6" fill="#ddd" d="M36 2.500h8v8h-8z" />
            <circle cx="45" cy="12" r="3.500" stroke="#9ba0a6" fill="#ccc" />
            <path fill={L} stroke="#1d5f96" d="M53.500 8h9v8h-9z" />
            <path stroke="#1d5f96" strokeWidth="1.500" d="M61 8V5c0-3.500 6-3.500 6 0v2M58 10.500v3" />
            <path fill="#fff" stroke="#111" d="M70.500 4.500h9v9h-9z" />
          </svg>
        </Combo>
        <Tools items={['Make Object Layer Current', 'Layer Previous', 'Layer States Manager']} />
      </Bar>
      <Bar label="Object properties">
        <span className="w-[2px]" />
        <Combo label="Color" value="ByLayer" width="w-[149px]">
          <span className="w-[10px] h-[11px] ml-[6px] bg-white border border-black shrink-0" />
        </Combo>
        <Sep wide />
        <Combo label="Linetype" value="ByLayer" width="w-[159px]" pad="pl-[5px]">
          <span className="w-[61px] h-px ml-[4px] bg-black shrink-0" />
        </Combo>
        <Sep wide />
        <Combo label="Lineweight" value="ByLayer" width="w-[124px]" pad="pl-[5px]">
          <span className="w-[36px] h-px ml-[4px] bg-black shrink-0" />
        </Combo>
        <Sep />
        <Combo label="Plot style" value="ByColor" width="w-[119px]" pad="pl-[10px]" disabled />
      </Bar>
      <Bar label="Smooth mesh">
        <Tools items={['Smooth Object', 'Mesh Sphere', 'Smooth More', 'Smooth Less', 'Refine Mesh', '|', 'Add Crease', 'Remove Crease']} />
      </Bar>
    </div>
    <div className="flex gap-px">
      <Bar label="Visual styles">
        <Tools items={['2D Wireframe', '|', '3D Wireframe', '3D Hidden', 'Realistic', 'Conceptual', '|', 'Manage Visual Styles']} />
      </Bar>
      <Bar label="View">
        <Tools items={['Named Views', '|', 'Top View', 'Bottom View', 'Left View', 'Right View', 'Front View', 'Back View', '|', 'SW Isometric', 'SE Isometric', 'NE Isometric', 'NW Isometric', '|', 'Create Camera', '|', 'Previous View']} />
        <Combo label="View" value="" width="w-[139px]" disabled />
      </Bar>
      <Bar label="Modeling">
        <Tools items={['Polysolid', 'Box', 'Wedge', 'Cone', 'Sphere', 'Cylinder', 'Torus', 'Pyramid', 'Helix', 'Planar Surface', '|', 'Extrude', 'Presspull', 'Sweep', 'Revolve', 'Loft', '|', ...BOOLEANS, '|', '3D Move', '3D Rotate', '3D Align', '3D Array']} />
      </Bar>
      <Bar label="Solid editing">
        <Tools items={[...BOOLEANS, '|', 'Extrude Faces', 'Move Faces', 'Offset Faces', 'Delete Faces', 'Rotate Faces', 'Taper Faces', 'Copy Faces', 'Color Faces', '|', 'Fillet Edge', 'Chamfer Edge', 'Copy Edges', 'Color Edges', '|', 'Imprint', 'Clean', 'Separate', 'Shell', 'Check']} />
      </Bar>
    </div>
  </div>
);

const SideBar: React.FC<{ label: string; items: string[] }> = ({ label, items }) => (
  <div role="toolbar" aria-label={label} className="flex flex-col items-center w-[25px] bg-[#ebebeb] border border-[#333] shrink-0">
    <span className="w-full h-[8px] bg-[#666] flex items-center justify-center">
      <span className="w-[14px] h-[5px] bg-[radial-gradient(#111_1px,transparent_1px)] bg-size-[3px_3px]" />
    </span>
    {items.map((name, i) =>
      name === '|' ? <span key={i} className="w-[19px] h-px my-[2px] bg-[#8c8c8c]" /> : <Tool key={i} name={name} vertical />
    )}
  </div>
);

// Each blade is its outer silhouette (the rim) and the lit top face inside it
const BLADES = [
  {
    rim: '797,427 794,393 792,363 787,342 780,332 767,318 747,306 723,297 700,292 677,291 657,292 613,303 577,315 537,333 517,346 505,361 500,380 502,398 515,420 537,437 567,450 593,455 627,463 650,470 683,482 719,498 800,500',
    face: '796,427 791,393 789,363 785,344 778,333 765,319 746,307 722,298 700,293 677,292 658,294 614,305 578,317 538,335 519,347 508,361 504,380 508,398 527,420 543,431 560,438 587,444 633,456 687,474 719,488 800,490',
    fill: 'url(#bladeA)',
    rimFill: 'url(#rimA)',
  },
  {
    rim: '831,428 839,393 840,350 842,330 848,318 862,302 887,287 914,280 942,278 976,283 1004,293 1042,312 1062,325 1093,348 1117,368 1129,383 1136,397 1138,417 1136,440 1128,455 1114,470 1098,480 1079,483 1045,490 1004,500 955,506 921,505 903,501 800,480',
    face: '835,428 842,407 844,380 844,340 848,322 863,304 888,288 914,281 942,279 975,285 1003,295 1041,314 1061,327 1091,350 1115,370 1126,384 1131,395 1134,417 1132,435 1122,452 1104,468 1076,481 1045,489 1004,499 955,505 921,504 903,500 800,480',
    fill: 'url(#bladeB)',
    rimFill: 'url(#rimB)',
  },
  {
    rim: '903,502 955,507 1004,500 1045,491 1079,483 1107,483 1131,487 1160,498 1184,516 1200,538 1206,562 1205,583 1197,613 1183,650 1172,667 1153,692 1131,712 1107,725 1079,731 1052,732 1024,728 1007,722 990,708 949,675 921,650 897,629 873,606 850,560',
    face: '903,502 955,507 1004,500 1045,491 1079,484 1107,484 1130,488 1158,499 1182,517 1198,540 1203,562 1202,583 1193,613 1179,640 1152,683 1135,700 1107,717 1086,722 1055,723 1024,717 997,703 955,672 921,643 880,608 850,560',
    fill: 'url(#bladeC)',
    rimFill: 'url(#rimC)',
  },
];

const LEFT_RIM = 'M719 538L640 528 583 518 540 509 503 506 470 510 447 518 430 530 417 543 411 560 412 583 417 603 427 623 447 653 470 673 500 684 533 688 570 685 603 674 630 659 663 627 697 601 720 588 753 571';
const LEFT_FACE = 'M752 563L733 559 719 538 640 528 583 518 540 510 503 507 471 511 448 519 432 531 419 544 415 570 427 607 450 647 467 658 490 670 510 676 543 678 580 673 613 658 637 642 663 617 690 597 720 578z';

const FRONT_RIM = 'M762 607L737 633 700 673 655 722 645 740 642 753 643 773 653 790 667 801 687 811 720 817 763 818 807 816 860 809 900 797 930 778 948 757 957 732 957 707 950 688 935 672 911 653 895 637 876 610 865 583 861 567';
const FRONT_FACE = 'M762 607L737 633 700 674 657 723 647 743 647 765 663 788 687 800 720 808 760 808 800 807 860 800 890 792 913 779 933 763 948 742 953 713 948 691 933 674 908 654 892 638 873 611 862 586 857 568 850 575 817 594 783 604z';

const HUB_TOP = '720,477 733,454 754,439 783,429 813,427 832,429 852,433 878,447 896,467 901,488 896,512 876,533 850,544 823,550 783,548 754,538 732,520 720,498';
const HUB_INNER = '736,480 745,462 766,447 795,438 826,439 852,446 873,460 885,478 886,493 880,510 856,528 828,538 794,539 769,533 745,515 737,493';
const HUB_FLOOR = '741,498 747,487 766,473 794,465 826,465 850,472 873,487 882,500 880,509 855,527 827,537 795,538 770,532 746,514';

const Fan = () => (
  <g strokeLinejoin="round" shapeRendering="crispEdges">
    <defs>
      <radialGradient id="bladeA" gradientUnits="userSpaceOnUse" cx="740" cy="500" r="260">
        <stop offset="0" stopColor="#c9c9ce" /><stop offset=".35" stopColor="#d6d7d2" /><stop offset=".7" stopColor="#deded3" /><stop offset="1" stopColor="#e2e2d6" />
      </radialGradient>
      <radialGradient id="bladeB" gradientUnits="userSpaceOnUse" cx="850" cy="470" r="280">
        <stop offset="0" stopColor="#cdcdd0" /><stop offset=".35" stopColor="#d9d9d3" /><stop offset=".7" stopColor="#e0e0d3" /><stop offset="1" stopColor="#e5e5d7" />
      </radialGradient>
      <radialGradient id="bladeC" gradientUnits="userSpaceOnUse" cx="880" cy="610" r="330">
        <stop offset="0" stopColor="#fdfcd9" /><stop offset=".25" stopColor="#f3f2d8" /><stop offset=".6" stopColor="#ecebd6" /><stop offset="1" stopColor="#e7e6d5" />
      </radialGradient>
      <linearGradient id="bladeD" gradientUnits="userSpaceOnUse" x1="620" y1="510" x2="580" y2="670">
        <stop offset="0" stopColor="#dfdfd4" /><stop offset=".5" stopColor="#e7e7d6" /><stop offset="1" stopColor="#eeedd8" />
      </linearGradient>
      <radialGradient id="bladeE" gradientUnits="userSpaceOnUse" cx="830" cy="590" r="240">
        <stop offset="0" stopColor="#ffffdc" /><stop offset=".5" stopColor="#f4f3d9" /><stop offset="1" stopColor="#eeedd6" />
      </radialGradient>
      <linearGradient id="rimA" gradientUnits="userSpaceOnUse" x1="500" y1="0" x2="720" y2="0">
        <stop offset="0" stopColor="#ecebd4" /><stop offset=".3" stopColor="#b4b3ca" /><stop offset="1" stopColor="#b9b8cc" />
      </linearGradient>
      <linearGradient id="rimB" gradientUnits="userSpaceOnUse" x1="840" y1="0" x2="1138" y2="0">
        <stop offset="0" stopColor="#f4f3d4" /><stop offset=".6" stopColor="#c0c0cc" /><stop offset="1" stopColor="#7472c0" />
      </linearGradient>
      <linearGradient id="rimC" gradientUnits="userSpaceOnUse" x1="900" y1="0" x2="1206" y2="0">
        <stop offset="0" stopColor="#dcdbd2" /><stop offset=".4" stopColor="#b5b4c8" /><stop offset="1" stopColor="#6f6dc0" />
      </linearGradient>
      <linearGradient id="rimD" gradientUnits="userSpaceOnUse" x1="412" y1="0" x2="750" y2="0">
        <stop offset="0" stopColor="#f2f1d4" /><stop offset=".3" stopColor="#b9b8ca" /><stop offset=".8" stopColor="#5f5dbb" />
      </linearGradient>
      <linearGradient id="rimE" gradientUnits="userSpaceOnUse" x1="642" y1="0" x2="957" y2="0">
        <stop offset="0" stopColor="#f2f1d4" /><stop offset=".3" stopColor="#b0afc9" /><stop offset="1" stopColor="#6765bd" />
      </linearGradient>
      <linearGradient id="hubSide" gradientUnits="userSpaceOnUse" x1="720" y1="0" x2="901" y2="0">
        <stop offset="0" stopColor="#d2d2d2" /><stop offset=".2" stopColor="#c3c3cd" /><stop offset=".5" stopColor="#a09fc9" /><stop offset=".75" stopColor="#7775c2" /><stop offset="1" stopColor="#4d4ab8" />
      </linearGradient>
      <linearGradient id="hubWall" gradientUnits="userSpaceOnUse" x1="737" y1="0" x2="885" y2="0">
        <stop offset="0" stopColor="#4d4abb" /><stop offset=".4" stopColor="#8d8bc6" /><stop offset=".75" stopColor="#bdbccd" /><stop offset="1" stopColor="#d2d2d0" />
      </linearGradient>
      <linearGradient id="hubHole">
        <stop offset="0" stopColor="#5552bb" /><stop offset="1" stopColor="#d0d0d0" />
      </linearGradient>
    </defs>
    {BLADES.map(b => (
      <g key={b.fill}>
        <polygon points={b.rim} fill={b.rimFill} />
        <polygon points={b.face} fill={b.fill} stroke="#e6e5d4" strokeWidth="4" />
        <polygon points={b.face} fill={b.fill} stroke="#fff" />
        <polygon points={b.rim} fill="none" stroke="#fff" strokeWidth="2" />
      </g>
    ))}
    <polygon points="720,477 901,488 900,523 894,560 875,595 865,590 850,575 800,640 762,607 737,633 732,627 720,605" fill="url(#hubSide)" />
    <path d="M720 477V605l12 22 6 6M901 488v35" fill="none" stroke="#fff" strokeWidth="2" />
    <polygon points={HUB_TOP} fill="#e9e8d6" stroke="#fff" strokeWidth="2" />
    <polygon points={HUB_INNER} fill="url(#hubWall)" stroke="#fff" strokeWidth="2" />
    <polygon points={HUB_FLOOR} fill="#e9e8d6" stroke="#fff" strokeWidth="2" />
    <path d="M804 465l3-3h7l3 3z" fill="#8d8bc6" stroke="#fff" />
    <ellipse cx="810" cy="515" rx="10" ry="6" fill="url(#hubHole)" stroke="#fff" strokeWidth="1.500" />

    <path d={`${LEFT_RIM}l-1-8-19-4z`} fill="url(#rimD)" />
    <path d={LEFT_FACE} fill="none" stroke="#e6e5d4" strokeWidth="4" />
    <path d={LEFT_FACE} fill="url(#bladeD)" />
    <path d="M419 544L415 570 427 607 450 647 467 658 490 670 510 676 543 678 580 673 613 658 637 642 663 617 690 597 720 578 750 563" fill="none" stroke="#fff" />
    <path d={LEFT_RIM} fill="none" stroke="#fff" strokeWidth="2" />

    <path d={`${FRONT_RIM}l-11 8-33 19-34 10z`} fill="url(#rimE)" />
    <path d={`${FRONT_FACE}`} fill="url(#bladeE)" />
    <path d="M647 765L663 788 687 800 720 808 760 808 800 807 860 800 890 792 913 779 933 763 948 742" fill="none" stroke="#e6e5d4" strokeWidth="5" />
    <path d="M657 723L647 743 647 765 663 788 687 800 720 808 760 808 800 807 860 800 890 792 913 779 933 763 948 742 953 713 948 691 933 674 908 654 892 638 873 611" fill="none" stroke="#fff" />
    <path d={FRONT_RIM} fill="none" stroke="#fff" strokeWidth="2" />
    <path d="M896 632l24 20 28 25" stroke="#212830" strokeWidth="2" fill="none" />

    <path d="M741.500 530v77" stroke="#7f7dff" />
    <path d="M682 556l90 39" stroke="#79ff7a" />
    <path d="M779 541l-56 61" stroke="#ff7f7d" />
    <path d="M738.500 580.500h6v6h-6z" fill="none" stroke="#fff" />
  </g>
);

const ViewCube = () => (
  <g fontFamily="Liberation Sans, sans-serif" fontWeight="bold">
    <ellipse cx="1607" cy="247" rx="56" ry="39" fill="none" stroke="#414951" strokeWidth="14" />
    <g fill="#a2a4a6" fontSize="20">
      <text x="-7" y="7" transform="translate(1562 219) rotate(-62)">E</text>
      <text x="-7" y="7" transform="translate(1573 280) rotate(28)">N</text>
      <text x="-9" y="7" transform="translate(1659 265) rotate(-152)">W</text>
    </g>
    <polygon points="1601,183 1641,199 1616,227 1573,208" fill="#b4b4b4" />
    <polygon points="1573,208 1616,227 1614,261 1576,243" fill="#a2a2a2" />
    <polygon points="1616,227 1641,199 1638,231 1614,261" fill="#8f8f8f" />
    <path d="M1573 208l43 19 25-28M1616 227l-2 34" fill="none" stroke="#333" strokeDasharray="6 2" />
    <path d="M1608 219l6-2 5 2v9l-4 4-7-4z" fill="#98a0aa" />
    <g fill="#4b4b4b" fontSize="10">
      <text x="-9" y="4" transform="translate(1607 202) rotate(-48)">TOP</text>
      <text x="-11" y="4" fontSize="9" transform="translate(1594 236) rotate(14)">LEFT</text>
      <text x="-13" y="3" fontSize="8" transform="translate(1627 230) rotate(-50)">FRONT</text>
    </g>
  </g>
);

const UcsIcon = () => (
  <g fontFamily="Liberation Sans, sans-serif" fontSize="17">
    <path d="M81 863l26-27" stroke="#b94b4b" strokeWidth="6" />
    <path d="M81 863l-41-17" stroke="#4aa04a" strokeWidth="5" />
    <path d="M81 862l-41-17" stroke="#c6f2c0" strokeWidth="1.500" />
    <path d="M81 866v-38" stroke="#3a5c9e" strokeWidth="6" />
    <path d="M79 829h4" stroke="#7fb2ff" strokeWidth="3" />
    <text x="80" y="824" fill="#1565ff">Z</text>
    <text x="104" y="832" fill="#e02222">X</text>
    <text x="36" y="842" fill="#12a012">Y</text>
  </g>
);

const DrawingArea = () => (
  <section className="flex-1 min-w-0 flex flex-col border-2 border-t-[#8b8b8b] border-l-[#8b8b8b] border-r-white border-b-white bg-[#f0f0f0]">
    <div className="flex">
      <div className="flex-1 min-w-0 relative bg-[#212830]">
        <svg viewBox="31 140 1658 776" className="block w-full h-auto" role="img" aria-label="Fan model">
          <Fan />
          <ViewCube />
          <UcsIcon />
        </svg>
        <div className="absolute left-[4px] top-[4px] text-[12px] leading-[18px] text-white">[−][Custom View][Conceptual]</div>
        <button type="button" className="absolute right-[48px] top-[169px] w-[68px] h-[17px] rounded-[3px] bg-[#9b9fae] border border-[#868b99] px-[3px] flex items-center justify-between text-[10px] text-[#4d525c]">
          Unnamed
          <svg viewBox="0 0 8 5" className="w-2 h-[5px]" fill="none" stroke="#c9ccd6"><path d="M.5.5h7L4 4.500z" /></svg>
        </button>
      </div>
      <div className="w-[22px] flex flex-col items-center justify-between py-2 bg-[#f0f0f0] shrink-0">
        <Chevron className="rotate-180" />
        <span className="w-[19px] h-[21px] bg-[#cdcdcd] mt-[-276px]" />
        <Chevron />
      </div>
    </div>
    <div className="flex items-stretch h-5 border-t border-[#777] font-[Liberation_Sans,sans-serif] text-[13px]">
      {['M2 1v8M9 1L4 5l5 4z', 'M7 1L3 5l4 4z', 'M3 1l4 4-4 4z', 'M8 1v8M1 1l5 4-5 4z'].map(d => (
        <button key={d} type="button" aria-label="Scroll layouts" className="w-[19px] flex items-center justify-center bg-[#fafafa] border-r border-[#aaa] shrink-0">
          <svg viewBox="0 0 10 10" className="w-[10px] h-[12px]" fill="#555" stroke="#555"><path d={d} /></svg>
        </button>
      ))}
      <button type="button" className="w-[67px] text-white bg-[#212830] [clip-path:polygon(0_0,100%_0,91%_100%,8%_100%)] shrink-0">Model</button>
      {['Layout1', 'Layout2'].map(name => (
        <React.Fragment key={name}>
          <button type="button" className="w-[60px] text-black shrink-0">{name}</button>
          <svg viewBox="0 0 8 20" className="w-2 h-full shrink-0" stroke="#555" strokeWidth="1.500"><path d="M7 0L1 20" /></svg>
        </React.Fragment>
      ))}
      <div className="ml-auto w-[585px] flex items-center bg-[#f0f0f0]">
        <span className="w-[6px] h-[18px] bg-[#cdcdcd] border-r border-[#aaa]" />
        <Chevron className="rotate-90 ml-[6px]" />
        <span className="w-[21px] h-[18px] bg-[#cdcdcd] ml-[6px]" />
        <Chevron className="-rotate-90 ml-auto mr-[28px]" />
      </div>
    </div>
  </section>
);

const CommandLine = () => (
  <section className="flex mr-[5px] border-r border-[#8a8a8a] font-[DejaVu_Sans_Mono,monospace]">
    <div className="w-[29px] shrink-0 flex flex-col items-center gap-[10px] pt-[5px] bg-linear-to-b from-[#8a8a8a] to-[#4a4a4a]">
      <span className="w-[22px] h-[8px] bg-[radial-gradient(#bbb_1px,transparent_1px)] bg-size-[4px_4px]" />
      <button type="button" aria-label="Close command line" className="block">
        <svg viewBox="0 0 12 12" className="block w-[11px] h-[11px]" stroke="#fff" strokeWidth="2"><path d="M1 1l10 10M11 1L1 11" /></svg>
      </button>
      <button type="button" aria-label="Customize" className="block">
        <svg viewBox="0 0 18 18" className="block w-[18px] h-[18px]" fill="none" stroke="#e4e8ee"><path strokeWidth="3.500" strokeLinecap="round" d="M8 8l7 7" /><path strokeWidth="3" d="M5 1.500c5 1 5 7 1 7.500-3 0-4-2-4-4" /></svg>
      </button>
    </div>
    <div className="flex-1 min-w-0">
      <p className="h-[37px] pl-[3px] pt-[11px] bg-[#c8c8c8] border-y border-[#777] text-[18px] leading-6 text-black">Command:</p>
      <label className="flex items-center h-[28px] pl-[6px] bg-white">
        <svg viewBox="0 0 19 18" className="w-[19px] h-[18px] shrink-0" fill="none"><rect x=".5" y=".5" width="18" height="17" rx="2" fill="#d5dae2" stroke="#b4bac4" /><path stroke="#555d69" strokeWidth="1.600" d="M4 4.500L8 8.500l-4 4M10 13h5" /></svg>
        <svg viewBox="0 0 8 5" className="w-2 h-[5px] ml-1 shrink-0"><path d="M0 0h8L4 5z" fill="#777" /></svg>
        <input type="text" aria-label="Command" placeholder="Type a command" className="flex-1 min-w-0 ml-[8px] bg-transparent outline-none text-[18px] italic placeholder:text-[#9c9c9c]" />
      </label>
    </div>
  </section>
);

const PALETTE: { name: string; icon: React.ReactNode }[] = [
  { name: 'Cylindric...', icon: <g strokeLinecap="round"><path stroke="#666c76" strokeWidth="7" d="M7 5h19M7 12l19-2M7 19l19-2M8 26l18-2" /><path stroke="#f4f5f7" strokeWidth="4.500" d="M7 5h19M7 12l19-2M7 19l19-2M8 26l18-2" /></g> },
  { name: 'Elliptic...', icon: <path fill="url(#shine)" d="M4 3c8-2 18 1 23 4v22c-8 0-18-2-23-6z" /> },
  { name: 'Frustu...', icon: <path fill="url(#shine)" d="M12 5c2-3 8-3 10 0l8 18c-3 7-24 7-27 0z" /> },
  { name: 'Frustu...', icon: <g><path fill="#f4f5f7" d="M13 3l4-2 4 2 9 18-13 9L3 21z" /><path fill="#bfc4cc" stroke="none" d="M17 4l4-1 8.500 18L17 29.500z" /></g> },
  { name: 'UCS', icon: <g strokeWidth="1.600"><path d="M5 4v23h22M5 27L21 11" /><path fill="#333" d="M5 2l2 4H3zM29 27l-4-2v4z" /></g> },
  { name: 'UCS Pr...', icon: <g strokeWidth="1.600"><path d="M5 4v23h22" /><path fill="#333" d="M5 2l2 4H3zM29 27l-4-2v4z" /><path strokeWidth="2.600" stroke="#222" d="M14 12c8-3 10 3 5 7" /><path fill="#222" stroke="none" d="M12 13l5-6v9z" /></g> },
  { name: '3D Align', icon: <g><path fill="#8b929b" d="M2 4l4-3v26l-4 2z" /><path fill="#a6d5ea" stroke={B} d="M6 7l3-3h12v12l-3 3H6z" /><path fill="#f3f4f6" d="M6 21l4-3h21v7l-3 4H6z" /></g> },
  { name: '2D Spiral', icon: <g><circle cx="15" cy="16" r="12.500" fill="#ebebeb" /><circle cx="15" cy="16" r="8.500" /><circle cx="15" cy="16" r="5.500" /><circle cx="15" cy="16" r="2.500" fill="#ccc" strokeWidth="2" /></g> },
];

const ToolPalette = () => (
  <aside className="flex w-[172px] shrink-0 pt-[2px]">
    <div className="w-7 shrink-0 pt-[27px]" role="tablist" aria-orientation="vertical">
      {TABS.map((tab, i) => (
        <button
          key={tab}
          type="button"
          role="tab"
          aria-selected={i === 0}
          className={`w-full h-[67px] flex justify-center pb-1 border-t border-l border-[#4d4d4d] rounded-l-[3px] text-[14px] text-black ${SHORT_TABS.includes(tab) ? 'items-center' : 'items-end'} ${i === 0 ? 'bg-[#f0f0f0]' : 'bg-[#cdcdcd]'}`}
        >
          <span className="[writing-mode:vertical-rl] rotate-180 leading-5">{tab}</span>
        </button>
      ))}
      <div className="h-[13px] flex flex-col justify-between border-y border-l border-[#4d4d4d] bg-[#cdcdcd] py-[3px]">
        <span className="h-px bg-[#4d4d4d]" />
        <span className="h-px bg-[#4d4d4d]" />
      </div>
    </div>
    <div className="flex-1 min-w-0 bg-[#f0f0f0] rounded-b-[3px]">
      <h2 className="flex items-center h-[25px] pl-[3px] gap-[5px] bg-[#a0a0a0] rounded-t-[4px] text-[14px] text-black">
        <span className="w-[4px] h-3 bg-[radial-gradient(#222_1px,transparent_1px)] bg-size-[3px_3px]" />
        Tool Palette...
      </h2>
      <ul className="pt-1">
        {PALETTE.map((tool, i) => (
          <li key={i}>
            <button type="button" className="flex items-center gap-[3px] h-[42px] pl-[7px] text-[14px] text-black">
              <svg viewBox="0 0 32 32" className="w-8 h-8" fill="none" stroke={K} strokeWidth="1.2">{tool.icon}</svg>
              {tool.name}
            </button>
          </li>
        ))}
      </ul>
    </div>
  </aside>
);

const statusButton = 'flex items-center justify-center h-[21px] border-r border-[#555] bg-linear-to-b from-[#c9c9c9] to-[#a9a9a9] shrink-0';

const StatusBar = () => (
  <footer className="flex items-center h-[22px] border-t border-black bg-linear-to-b from-[#999] to-[#747474] text-[13px] text-black">
    <span className="w-[126px] pl-[11px] shrink-0 font-[Liberation_Sans,sans-serif] text-[12px] whitespace-pre">-409, 873 , 0</span>
    {STATUS.map(([name, on]) => (
      <button
        key={name}
        type="button"
        title={name}
        aria-pressed={on}
        className={`flex items-center justify-center w-[22px] h-[21px] border-r border-[#555] shrink-0 ${on ? 'bg-linear-to-b from-[#d6eef4] to-[#8fc6d6]' : 'bg-linear-to-b from-[#c9c9c9] to-[#a9a9a9]'}`}
      >
        <Icon name={name} />
      </button>
    ))}
    <div className="flex items-center ml-auto mr-[2px]">
      <button type="button" className={`${statusButton} w-[53px] border-l`}>MODEL</button>
      <button type="button" aria-label="Quick View Layouts" className={`${statusButton} w-[22px]`}><Icon name="Quick View Layouts" /></button>
      <button type="button" aria-label="Quick View Drawings" className={`${statusButton} w-[22px] mr-[12px]`}><Icon name="Quick View Drawings" /></button>
      <button type="button" aria-label="Annotation scale" className={`${statusButton} w-[53px] gap-[2px]`}>
        <Icon name="Annotation Scale" />1:1
        <svg viewBox="0 0 8 5" className="w-[7px] h-[5px]"><path d="M0 0h8L4 5z" /></svg>
      </button>
      <button type="button" aria-label="Annotation Visibility" className={`${statusButton} w-[22px]`}><Icon name="Annotation Visibility" /></button>
      <button type="button" aria-label="Auto Scale" className={`${statusButton} w-[22px] mr-[6px]`}><Icon name="Auto Scale" /></button>
      {['Workspace Switching', 'Toolbar Lock', 'Hardware Acceleration'].map(name => (
        <button key={name} type="button" aria-label={name} className={`${statusButton} w-[22px]`}><Icon name={name} /></button>
      ))}
      <button type="button" aria-label="Trusted DWG" className="flex items-center justify-center w-[24px] h-[21px] bg-[#a2a2a2]"><Icon name="Trusted DWG" /></button>
      <button type="button" aria-label="Isolate Objects" className="flex items-center justify-center w-[20px] h-[21px] bg-[#a2a2a2]"><Icon name="Isolate Objects" /></button>
      <button type="button" aria-label="Status bar menu" className={`${statusButton} w-[13px] ml-[8px]`}><svg viewBox="0 0 8 5" className="w-[6px] h-1"><path d="M0 0h8L4 5z" /></svg></button>
      <button type="button" aria-label="Clean Screen" className={`${statusButton} w-[21px]`}><Icon name="Clean Screen" /></button>
    </div>
  </footer>
);

const APPS: { name: string; state: string; icon: React.ReactNode }[] = [
  { name: 'Microsoft Edge', state: '', icon: <path fill="#0078d7" d="M2 12.500C3.500 5 8.500 1 14.500 1 22 1 26 6.500 26 13v3.500H9.500c.5 4.500 4 6.500 8 6.500 2.500 0 4.500-.7 6.500-2v5.500C22 27.500 19.500 28 17 28c-8 0-12.500-4.500-12.500-10.500 0-4.500 2.500-7.500 6-9-1 1.200-1.300 2.500-1.500 4h10c.3-3.800-2-6-5.500-6C9 6.500 5 9 2 12.500z" /> },
  { name: 'File Explorer', state: '', icon: <g><path fill="#f6c945" d="M1 2h9l2 2h14v3H1z" /><path fill="#ffe396" d="M1 5h26v19H1z" /><path fill="#37b2e8" d="M6 15c0-1 1-2 2-2h12c1 0 2 1 2 2v10h-4v-6h-8v6H6z" /></g> },
  { name: 'Camera', state: '', icon: <g><path fill="#fff" d="M0 4h7l2-3h9l2 3h8v20H0z" /><ellipse cx="16" cy="14" rx="7" ry="8.500" fill="#050808" /><ellipse cx="14.500" cy="14" rx="7" ry="8" fill="#050808" stroke="#fff" /><circle cx="24" cy="7.500" r="1" fill="#050808" /></g> },
  { name: 'Store', state: '', icon: <g><path fill="none" stroke="#fff" strokeWidth="1.500" d="M9 6V4c0-6 10-6 10 0v2M12 6V4c0-4 5-4 5 0" /><path fill="#fff" d="M0 6h28v21H0z" /><path fill="#f25022" d="M8 10h5.500v5.500H8z" /><path fill="#7fba00" d="M14.500 10H20v5.500h-5.500z" /><path fill="#00a4ef" d="M8 16.500h5.500V22H8z" /><path fill="#ffb900" d="M14.500 16.500H20V22h-5.500z" /></g> },
  { name: 'Groove Music', state: '', icon: <g fill="none" stroke="#fff" strokeWidth="2.500"><path d="M20 1.800A13 13.500 0 1 0 26.500 10" /><circle cx="14" cy="14" r="4.500" strokeWidth="3.500" /><path strokeWidth="2" d="M17.500 2c3 1 2 4 5 5l3.500-.500M21 10l1-3" /></g> },
  { name: 'Mail', state: '', icon: <g><path fill="#fff" d="M0 10L14 2l14 8v15H0z" /><path fill="#050808" d="M2 10h24l-9 5.500 5 6L14 15z" /></g> },
  { name: 'Google Chrome', state: 'border-b-[3px] border-[#9ff3c9]', icon: <g><circle cx="14" cy="14" r="13.500" fill="#fdc92e" /><path fill="#de4a3d" d="M2.300 7.300A13.500 13.500 0 0 1 25.700 7.300H14L8.400 17z" /><path fill="#15a35f" d="M2.300 7.300A13.500 13.500 0 0 0 14 27.500l6-10-11-.5z" /><circle cx="14" cy="14" r="6.300" fill="#fff" /><circle cx="14" cy="14" r="5" fill="#4587f3" /></g> },
  { name: 'AutoCAD 2013', state: 'bg-[#454a49] border-b-[3px] border-[#9ff3c9]', icon: <g><path fill="#1c1c1c" d="M0 5h28v17H0z" /><path fill="#e00000" d="M0 21h28v7H0z" /><path fill="#e2e2e2" d="M6 0l5 1 8 20-5 2-3-5H8l-1 6-4-1z" /><path fill="#666" d="M8 7l2 7H7z" /><path stroke="#999" strokeWidth="1.500" fill="none" d="M19 8l3-2 3 3-4 4 3 3v4M26 7v12" /></g> },
];

const Taskbar = () => (
  <div className="flex items-center h-[50px] bg-linear-to-r from-[#020404] via-[#071310] to-[#020404] text-white">
    <button type="button" aria-label="Start" className="w-[60px] h-full flex items-center justify-center shrink-0">
      <svg viewBox="0 0 20 20" className="w-5 h-5" fill="#fff"><path d="M0 3l8-1.200V9.500H0zM9 1.600L20 0v9.500H9zM0 10.500h8v7.700L0 17zM9 10.500h11V20L9 18.400z" /></svg>
    </button>
    <label className="flex items-center w-[430px] h-full bg-[#f2f2f2] pl-3 pr-[17px] shrink-0">
      <svg viewBox="0 0 28 28" className="w-[27px] h-[27px] shrink-0" fill="none" stroke="#111" strokeWidth="3"><circle cx="14" cy="14" r="12" /></svg>
      <input type="text" aria-label="Search" placeholder="Type here to search" className="flex-1 min-w-0 ml-[11px] bg-transparent outline-none text-[16px] font-[Noto_Sans,sans-serif] placeholder:text-[#3c3c3c]" />
      <svg viewBox="0 0 16 20" className="w-[18px] h-5 shrink-0" fill="none" stroke="#333" strokeWidth="1.500"><path d="M5 1h6v9a3 3 0 0 1-6 0z" /><path fill="#333" d="M5 7h6v4a3 3 0 0 1-6 0z" /><path d="M1.500 9v3c0 2 2 4 4 4h5c2 0 4-2 4-4V9M8 16v3M5 19h6" /></svg>
    </label>
    <button type="button" aria-label="Task View" className="w-[60px] h-full mr-[3px] flex items-center justify-center shrink-0">
      <svg viewBox="0 0 22 20" className="w-[22px] h-5" fill="none" stroke="#fff" strokeWidth="1.300"><path d="M1 0v3h13V0M1 6h13v8H1zM1 20v-3h13v3M19 0v5M19 11v9" /><path strokeWidth="3" d="M19 6.500v3" /></svg>
    </button>
    {APPS.map(app => (
      <button key={app.name} type="button" aria-label={app.name} className={`w-[62px] h-full flex items-center justify-center shrink-0 ${app.state}`}>
        <svg viewBox="0 0 28 28" className="w-[28px] h-[28px] overflow-visible">{app.icon}</svg>
      </button>
    ))}
    <div className="flex items-center ml-auto h-full text-[14px] font-[Noto_Sans,sans-serif]">
      <button type="button" aria-label="People" className="w-[44px] flex justify-center mr-[10px]">
        <svg viewBox="0 0 18 20" className="w-[18px] h-5" fill="none" stroke="#fff" strokeWidth="1.400"><circle cx="12.500" cy="4" r="3" /><path d="M9 10c1-3.500 7-3.500 8 1" /><circle cx="6" cy="10" r="3" /><path d="M1 19c0-7 9-7 9-1" /></svg>
      </button>
      <button type="button" aria-label="Show hidden icons" className="w-[30px] flex justify-center">
        <svg viewBox="0 0 16 9" className="w-4 h-[9px]" fill="none" stroke="#fff" strokeWidth="1.400"><path d="M.5 8.500L8 1l7.500 7.500" /></svg>
      </button>
      <button type="button" aria-label="Battery" className="w-[30px] flex justify-center">
        <svg viewBox="0 0 20 18" className="w-5 h-[18px]" fill="none" stroke="#fff" strokeWidth="1.300"><path d="M1 2h16v10H1zM18.500 5v4" /><path fill="#fff" d="M3 4h4v6H3z" /><circle cx="14" cy="12" r="5" fill="#13a10e" stroke="none" /><path d="M14 9v6M12.500 11.500h3" /></svg>
      </button>
      <button type="button" aria-label="Network" className="w-[30px] flex justify-center">
        <svg viewBox="0 0 18 18" className="w-[18px] h-[18px]" fill="none" stroke="#cfd3d3" strokeWidth="1.300"><path d="M1.500 17C1.500 8 8 2 17 2M5.500 17C5.500 10 10 6 17 6M9.500 17c0-4 3-7 7.500-7" /><circle cx="15" cy="15.500" r="1.500" fill="#fff" /></svg>
      </button>
      <button type="button" aria-label="Volume" className="w-[30px] flex justify-center">
        <svg viewBox="0 0 22 18" className="w-[22px] h-[18px]" fill="none" stroke="#fff" strokeWidth="1.300"><path d="M1 6h3l5-4v14l-5-4H1zM12 7c1 1 1 3 0 4M15 4.500c2 3 2 6 0 9M18 2c3 4 3 10 0 14" /></svg>
      </button>
      <div className="w-[44px] text-center leading-[22px]">ENG<br />IN</div>
      <time className="w-[98px] ml-1 text-center leading-[22px]">20:09<br />23-07-2018</time>
      <button type="button" aria-label="Action center" className="w-[38px] flex justify-center">
        <svg viewBox="0 0 20 20" className="w-5 h-5" fill="none" stroke="#fff" strokeWidth="1.200"><path d="M.5 1h19v15H13l-3 3-3-3H.5z" /></svg>
      </button>
      <span className="w-px h-full ml-[16px] mr-1 bg-[#5c6160]" />
    </div>
  </div>
);

export default function App() {
  return (
    <div className="min-h-screen flex flex-col overflow-hidden bg-[#666] font-[Open_Sans,Noto_Sans,sans-serif]">
      <Defs />
      <TitleBar />
      <MenuBar />
      <Toolbars />
      <main className="flex flex-1 pb-px">
        <div className="flex-1 min-w-0 flex flex-col justify-between gap-1">
          <div className="flex items-start gap-1">
            <SideBar label="Draw" items={DRAW} />
            <DrawingArea />
            <div className="flex flex-col gap-px mr-[7px]">
              <SideBar label="Modify" items={MODIFY} />
              <SideBar label="Draw order" items={ORDER} />
            </div>
          </div>
          <CommandLine />
        </div>
        <ToolPalette />
      </main>
      <StatusBar />
      <Taskbar />
    </div>
  );
}
